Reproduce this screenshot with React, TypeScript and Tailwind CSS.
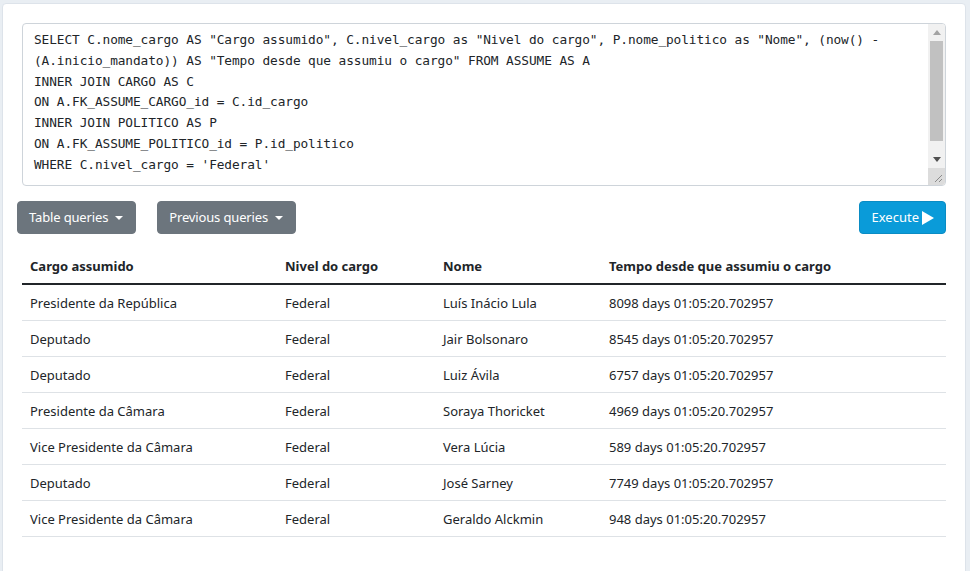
import React from "react";

const QUERY = `SELECT C.nome_cargo AS "Cargo assumido", C.nivel_cargo as "Nivel do cargo", P.nome_politico as "Nome", (now() - (A.inicio_mandato)) AS "Tempo desde que assumiu o cargo" FROM ASSUME AS A
INNER JOIN CARGO AS C
ON A.FK_ASSUME_CARGO_id = C.id_cargo
INNER JOIN POLITICO AS P
ON A.FK_ASSUME_POLITICO_id = P.id_politico
WHERE C.nivel_cargo = 'Federal'`;

const HEADERS = ["Cargo assumido", "Nivel do cargo", "Nome", "Tempo desde que assumiu o cargo"];

const ROWS = [
  ["Presidente da República", "Federal", "Luís Inácio Lula", "8098 days 01:05:20.702957"],
  ["Deputado", "Federal", "Jair Bolsonaro", "8545 days 01:05:20.702957"],
  ["Deputado", "Federal", "Luiz Ávila", "6757 days 01:05:20.702957"],
  ["Presidente da Câmara", "Federal", "Soraya Thoricket", "4969 days 01:05:20.702957"],
  ["Vice Presidente da Câmara", "Federal", "Vera Lúcia", "589 days 01:05:20.702957"],
  ["Deputado", "Federal", "José Sarney", "7749 days 01:05:20.702957"],
  ["Vice Presidente da Câmara", "Federal", "Geraldo Alckmin", "948 days 01:05:20.702957"],
];

const COL_W = ["w-[255px]", "w-[158px]", "w-[166px]", ""];

function Caret() {
  return (
    <svg width="8" height="4" viewBox="0 0 8 4" className="ml-[7px] mt-[1px]">
      <path d="M0 0h8L4 4z" fill="currentColor" />
    </svg>
  );
}

function GrayButton({ label }: { label: string }) {
  return (
    <button
      type="button"
      className="flex items-center h-[33px] pl-[11px] pr-[12px] rounded-[4px] bg-[#6c757d] border border-[#6c757d] text-white text-[13px] leading-[21px] tracking-[-0.15px]"
    >
      {label}
      <Caret />
    </button>
  );
}

function FakeScrollbar() {
  return (
    <div className="w-[17px] flex flex-col bg-[#f1f1f1] shrink-0">
      <div className="h-[17px] flex items-center justify-center">
        <svg width="8" height="5" viewBox="0 0 8 5">
          <path d="M0 5h8L4 0z" fill="#a3a3a3" />
        </svg>
      </div>
      <div className="mx-[2px] h-[100px] bg-[#c1c1c1]" />
      <div className="flex-1" />
      <div className="h-[17px] flex items-center justify-center">
        <svg width="8" height="5" viewBox="0 0 8 5">
          <path d="M0 0h8L4 5z" fill="#505050" />
        </svg>
      </div>
      <div className="h-[17px] bg-[#dcdcdc] flex items-end justify-end">
        <svg width="10" height="10" viewBox="0 0 10 10" className="mr-[2px] mb-[2px]">
          <path d="M9 2L2 9M9 6L6 9" stroke="#8a8a8a" strokeWidth="1" />
        </svg>
      </div>
    </div>
  );
}

export default function App() {
  return (
    <div
      className="w-[970px] h-[571px] overflow-hidden bg-[#e9eef3] pl-[2px] pt-[3px] pr-[4px]"
      style={{ fontFamily: '"Segoe UI", "Noto Sans", "Open Sans", sans-serif' }}
    >
      <div className="h-[600px] bg-white rounded-[4px] border border-[#dde3ea] px-[19px] pt-[19px] text-[#212529]">
        {/* query box */}
        <div className="flex h-[163px] border border-[#ced4da] rounded-[4px] overflow-hidden">
          <div
            className="flex-1 pl-[11px] pr-[6px] pt-[6px] text-[12.8px] leading-[20.8px] tracking-[-0.09px] text-[#212529] whitespace-pre-wrap"
            style={{ fontFamily: '"DejaVu Sans Mono", "Liberation Mono", monospace' }}
          >
            {QUERY}
          </div>
          <FakeScrollbar />
        </div>

        {/* toolbar */}
        <div className="flex items-center mt-[15px] -ml-[5px]">
          <GrayButton label="Table queries" />
          <div className="w-[21px]" />
          <GrayButton label="Previous queries" />
          <div className="flex-1" />
          <button
            type="button"
            className="flex items-center h-[33px] pl-3 pr-[11px] rounded-[4px] bg-[#0a9bd9] border border-[#0a8cc4] text-white text-[13px] leading-[21px]"
          >
            Execute
            <svg width="12" height="14" viewBox="0 0 12 14" className="ml-[3px]">
              <path d="M0 0L12 7L0 14z" fill="white" />
            </svg>
          </button>
        </div>

        {/* results */}
        <table className="w-full mt-[14px] text-[13px] leading-[21px] border-collapse">
          <thead>
            <tr className="border-b-2 border-[#212529]">
              {HEADERS.map((h, i) => (
                <th key={h} className={`${COL_W[i]} text-left font-bold px-2 pt-[8px] pb-[6px]`}>
                  {h}
                </th>
              ))}
            </tr>
          </thead>
          <tbody>
            {ROWS.map((r, ri) => (
              <tr key={ri} className="border-b border-[#dee2e6]">
                {r.map((c, ci) => (
                  <td key={ci} className="px-2 pt-[8px] pb-[6px]">
                    {c}
                  </td>
                ))}
              </tr>
            ))}
          </tbody>
        </table>
      </div>
    </div>
  );
}
